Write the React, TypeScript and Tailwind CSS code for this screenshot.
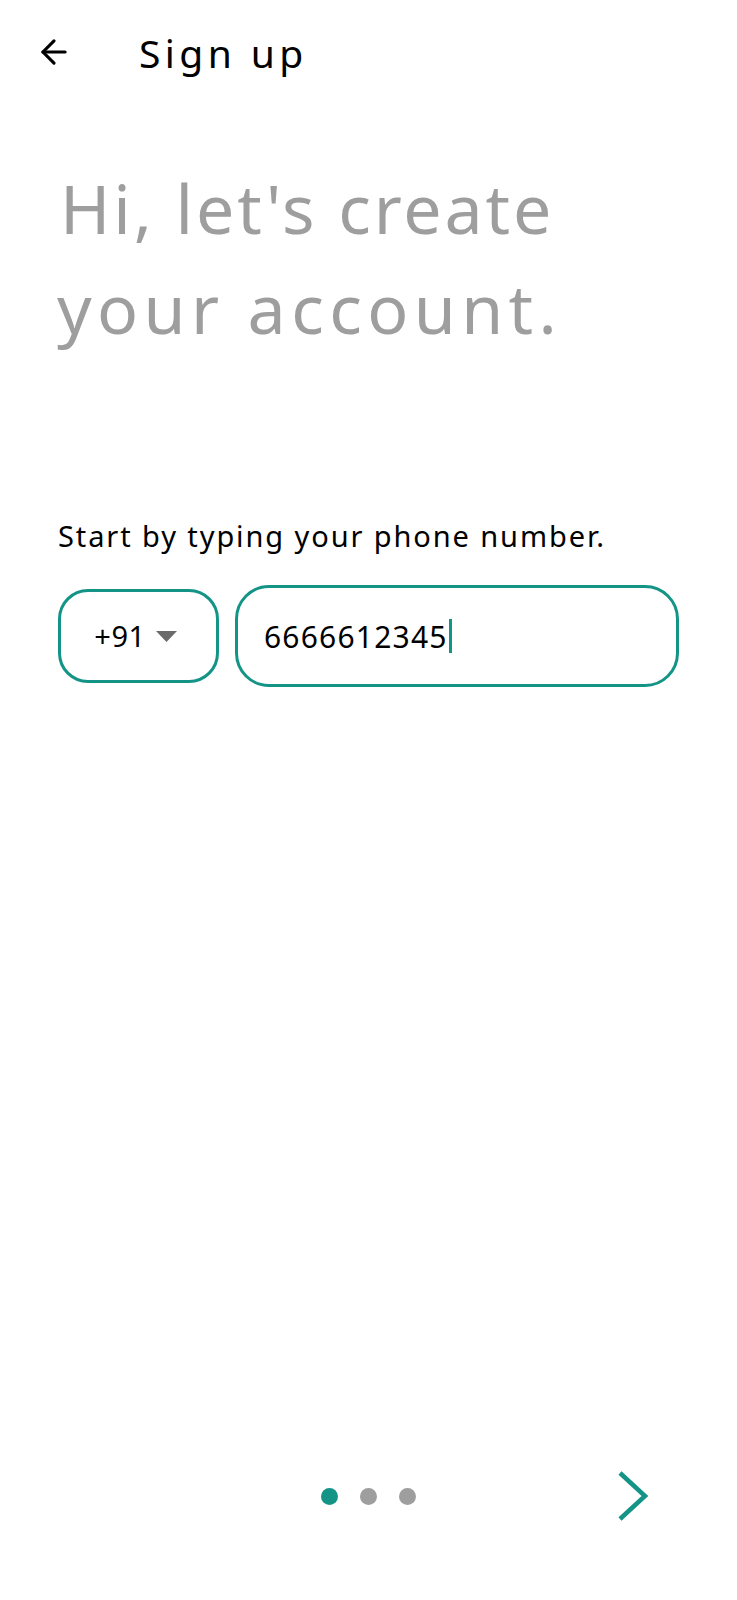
import { ArrowLeft } from 'lucide-react'

const font = { fontFamily: '"Noto Sans", "Open Sans", sans-serif' }

export default function App() {
  return (
    <div className="flex h-[1600px] w-[737px] flex-col bg-white text-black" style={font}>
      {/* Top bar */}
      <header className="flex h-[104px] items-center pl-[34px]">
        <button className="flex h-[40px] w-[40px] items-center justify-center">
          <ArrowLeft className="h-[38px] w-[38px]" strokeWidth={2} />
        </button>
        <h1 className="ml-[65px] text-[39px] leading-none tracking-[4.4px]">Sign up</h1>
      </header>

      {/* Heading */}
      <div className="mt-[54px] pl-[60px]">
        <p className="text-[68px] leading-[100px] text-[#9e9e9e]">
          <span className="block tracking-[2.9px]">Hi, let's create</span>
          <span className="block -ml-[3px] tracking-[5.4px]">your account.</span>
        </p>
      </div>

      {/* Phone form */}
      <div className="mt-[160px] px-[58px]">
        <p className="text-[29px] leading-[36px] tracking-[1.9px]">Start by typing your phone number.</p>
        <div className="mt-[31px] flex items-center">
          <button className="flex h-[94px] w-[161px] items-center justify-center gap-[10px] rounded-[30px] border-[3px] border-[#139486] pr-[6px]">
            <span className="text-[29px] tracking-[0.5px]">+91</span>
            <svg width="21" height="11" viewBox="0 0 21 11">
              <path d="M0 0 L21 0 L10.5 11 Z" fill="#6b6b6b" />
            </svg>
          </button>
          <div className="ml-[16px] flex h-[102px] flex-1 items-center rounded-[34px] border-[3px] border-[#139486] pl-[26px]">
            <span className="text-[30px] tracking-[1.2px]">6666612345</span>
            <span className="ml-[1px] h-[34px] w-[3px] bg-[#139486]" />
          </div>
        </div>
      </div>

      {/* Footer: pager dots + next */}
      <footer className="mt-auto mb-[79px] flex h-[50px] items-center pl-[321px] pr-[88px]">
        <div className="flex items-center gap-[22px]">
          <span className="h-[17px] w-[17px] rounded-full bg-[#139486]" />
          <span className="h-[17px] w-[17px] rounded-full bg-[#9e9e9e]" />
          <span className="h-[17px] w-[17px] rounded-full bg-[#9e9e9e]" />
        </div>
        <button className="ml-auto flex items-center justify-center">
          <svg width="32" height="50" viewBox="0 0 32 50">
            <path d="M3 2 L28 25 L3 48" fill="none" stroke="#139486" strokeWidth="4.5" />
          </svg>
        </button>
      </footer>
    </div>
  )
}
